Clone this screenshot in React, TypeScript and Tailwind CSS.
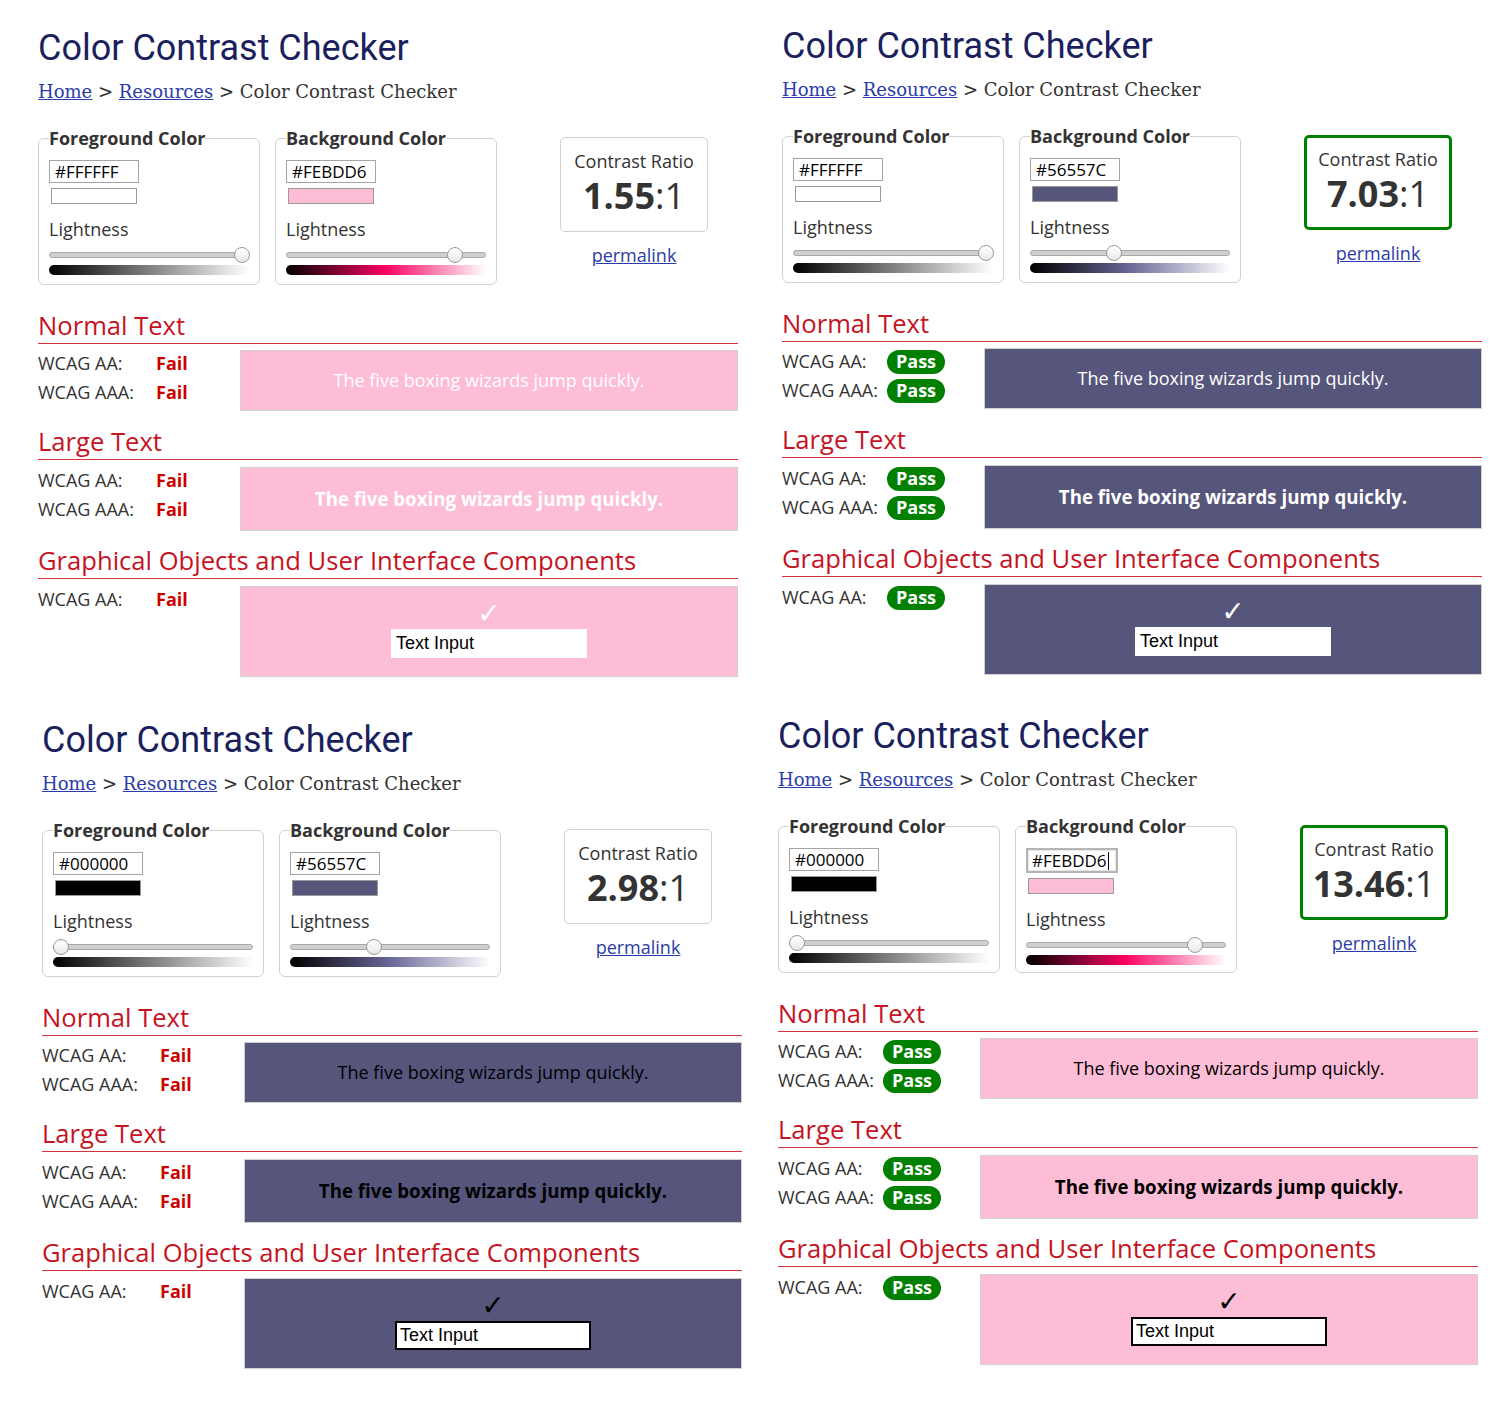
import React from "react";

type Swatch = {
  hex: string;
  lightness: number; // 0-100
  gradient: string;
  focused?: boolean;
};

type Panel = {
  fg: Swatch;
  bg: Swatch;
  ratio: string;
  pass: boolean;
  wrap: string;
};

const GRAY = "linear-gradient(to right, #000000, #808080, #ffffff)";
const PINK = "linear-gradient(to right, hsl(337,97%,0%), hsl(337,97%,50%), hsl(337,97%,100%))";
const PURPLE = "linear-gradient(to right, hsl(242,19%,0%), hsl(242,19%,50%), hsl(242,19%,100%))";

const panels: Panel[] = [
  {
    fg: { hex: "#FFFFFF", lightness: 100, gradient: GRAY },
    bg: { hex: "#FEBDD6", lightness: 87, gradient: PINK },
    ratio: "1.55",
    pass: false,
    wrap: "ml-[38px] mt-[4px]",
  },
  {
    fg: { hex: "#FFFFFF", lightness: 100, gradient: GRAY },
    bg: { hex: "#56557C", lightness: 41, gradient: PURPLE },
    ratio: "7.03",
    pass: true,
    wrap: "ml-[44px] mt-[2px]",
  },
  {
    fg: { hex: "#000000", lightness: 0, gradient: GRAY },
    bg: { hex: "#56557C", lightness: 41, gradient: PURPLE },
    ratio: "2.98",
    pass: false,
    wrap: "ml-[42px] mt-[4px]",
  },
  {
    fg: { hex: "#000000", lightness: 0, gradient: GRAY },
    bg: { hex: "#FEBDD6", lightness: 87, gradient: PINK, focused: true },
    ratio: "13.46",
    pass: true,
    wrap: "ml-[36px] mt-0",
  },
];

const ColorBox: React.FC<{ title: string; sw: Swatch }> = ({ title, sw }) => (
  <fieldset className="w-[222px] h-[158px] border border-[#d0d0d0] rounded-[6px] px-[10px] pt-[11px]">
    <legend className="px-0 text-[18px] leading-[22px] font-bold text-[#333]">{title}</legend>
    {sw.focused ? (
      <div className="w-[92px] h-[25px] border-2 border-[#b5b5b5] flex items-center pl-[4px] text-[17px] text-black shadow-[inset_0_0_0_1px_#e6e6e6]">
        <span className="border-r border-black pr-[1px] leading-[18px]">{sw.hex}</span>
      </div>
    ) : (
      <div className="w-[90px] h-[23px] border border-[#a5a5a5] flex items-center pl-[5px] text-[17px] text-black">
        {sw.hex}
      </div>
    )}
    <div
      className="ml-[2px] mt-[5px] w-[86px] h-[16px] border border-[#9a9a9a]"
      style={{ backgroundColor: sw.hex }}
    />
    <div className="mt-[14px] text-[18px] leading-[22px] text-[#333]">Lightness</div>
    <div className="relative mt-[12px] h-[6px] w-[200px] rounded-full bg-[#cfcfcf] border border-[#a8a8a8]">
      <div
        className="absolute top-1/2 w-[16px] h-[16px] -translate-x-1/2 -translate-y-1/2 rounded-full border border-[#9a9a9a] bg-gradient-to-b from-white to-[#e8e8e8]"
        style={{ left: 7 + sw.lightness * 1.85 }}
      />
    </div>
    <div className="mt-[7px] h-[10px] w-[200px] rounded-l-full" style={{ background: sw.gradient }} />
  </fieldset>
);

const Status: React.FC<{ pass: boolean }> = ({ pass }) =>
  pass ? (
    <span className="inline-flex h-[24px] w-[58px] items-center justify-center rounded-full bg-[#008000] text-[18px] font-bold text-white">
      Pass
    </span>
  ) : (
    <span className="ml-[13px] text-[18px] font-bold text-[#cc0000]">Fail</span>
  );

const Heading: React.FC<{ children: React.ReactNode }> = ({ children }) => (
  <h2 className="text-[25.6px] leading-[33px] pb-[1px] border-b border-[#d4333b] text-[#c5141f]">{children}</h2>
);

const Rows: React.FC<{ labels: string[]; pass: boolean }> = ({ labels, pass }) => (
  <div className="w-[202px] shrink-0 -mt-[1px]">
    {labels.map((l) => (
      <div key={l} className="flex items-center h-[29px]">
        <span className="w-[105px] text-[18px] text-[#333]">{l}</span>
        <Status pass={pass} />
      </div>
    ))}
  </div>
);

const ContrastPanel: React.FC<{ p: Panel }> = ({ p }) => (
  <div className={`w-[700px] h-[688px] shrink-0 ${p.wrap}`}>
    <h1 className="pt-[23px] text-[36px] leading-[43px] text-[#1b1f5e] font-['Roboto',sans-serif]">
      Color Contrast Checker
    </h1>
    <div className="mt-[11px] text-[18px] leading-[22px] text-[#333] font-['DejaVu_Serif',serif]">
      <a className="text-[#2a3ca8] underline">Home</a> &gt; <a className="text-[#2a3ca8] underline">Resources</a> &gt; Color Contrast Checker
    </div>

    <div className="mt-[24px] flex items-start">
      <div className="flex gap-[15px]">
        <ColorBox title="Foreground Color" sw={p.fg} />
        <ColorBox title="Background Color" sw={p.bg} />
      </div>
      <div className="ml-[63px] mt-[10px] w-[148px] flex flex-col items-center">
        <div
          className={`w-[148px] h-[95px] rounded-[5px] flex flex-col items-center justify-center ${
            p.pass ? "border-[3px] border-[#008000]" : "border border-[#d0d0d0]"
          }`}
        >
          <div className="text-[18px] leading-[22px] text-[#333]">Contrast Ratio</div>
          <div className="text-[36px] leading-[48px] text-[#333]">
            <span className="font-bold">{p.ratio}</span>:1
          </div>
        </div>
        <a className="mt-[11px] text-[18px] leading-[24px] text-[#2a3ca8] underline">permalink</a>
      </div>
    </div>

    <div className="mt-[24px]">
      <Heading>Normal Text</Heading>
      <div className="mt-[6px] flex">
        <Rows labels={["WCAG AA:", "WCAG AAA:"]} pass={p.pass} />
        <div
          className="flex-1 h-[61px] border border-[#d0d0d0] flex items-center justify-center text-[18px]"
          style={{ backgroundColor: p.bg.hex, color: p.fg.hex }}
        >
          The five boxing wizards jump quickly.
        </div>
      </div>
    </div>

    <div className="mt-[14px]">
      <Heading>Large Text</Heading>
      <div className="mt-[7px] flex">
        <Rows labels={["WCAG AA:", "WCAG AAA:"]} pass={p.pass} />
        <div
          className="flex-1 h-[64px] border border-[#d0d0d0] flex items-center justify-center text-[18.7px] font-bold"
          style={{ backgroundColor: p.bg.hex, color: p.fg.hex }}
        >
          The five boxing wizards jump quickly.
        </div>
      </div>
    </div>

    <div className="mt-[13px]">
      <Heading>Graphical Objects and User Interface Components</Heading>
      <div className="mt-[7px] flex">
        <Rows labels={["WCAG AA:"]} pass={p.pass} />
        <div
          className="flex-1 h-[91px] border border-[#d0d0d0] flex flex-col items-center pt-[12px]"
          style={{ backgroundColor: p.bg.hex }}
        >
          <div className="text-[28px] leading-[30px] font-['DejaVu_Sans',sans-serif]" style={{ color: p.fg.hex }}>
            ✓
          </div>
          <div
            className="w-[196px] h-[29px] border-2 bg-white flex items-center pl-[3px] text-[18px] text-black font-['Liberation_Sans',sans-serif]"
            style={{ borderColor: p.fg.hex }}
          >
            Text Input
          </div>
        </div>
      </div>
    </div>
  </div>
);

export default function App() {
  return (
    <div className="w-[1511px] h-[1404px] bg-white font-['Open_Sans',sans-serif] overflow-hidden">
      <div className="flex items-start">
        <ContrastPanel p={panels[0]} />
        <ContrastPanel p={panels[1]} />
      </div>
      <div className="flex items-start">
        <ContrastPanel p={panels[2]} />
        <ContrastPanel p={panels[3]} />
      </div>
    </div>
  );
}
